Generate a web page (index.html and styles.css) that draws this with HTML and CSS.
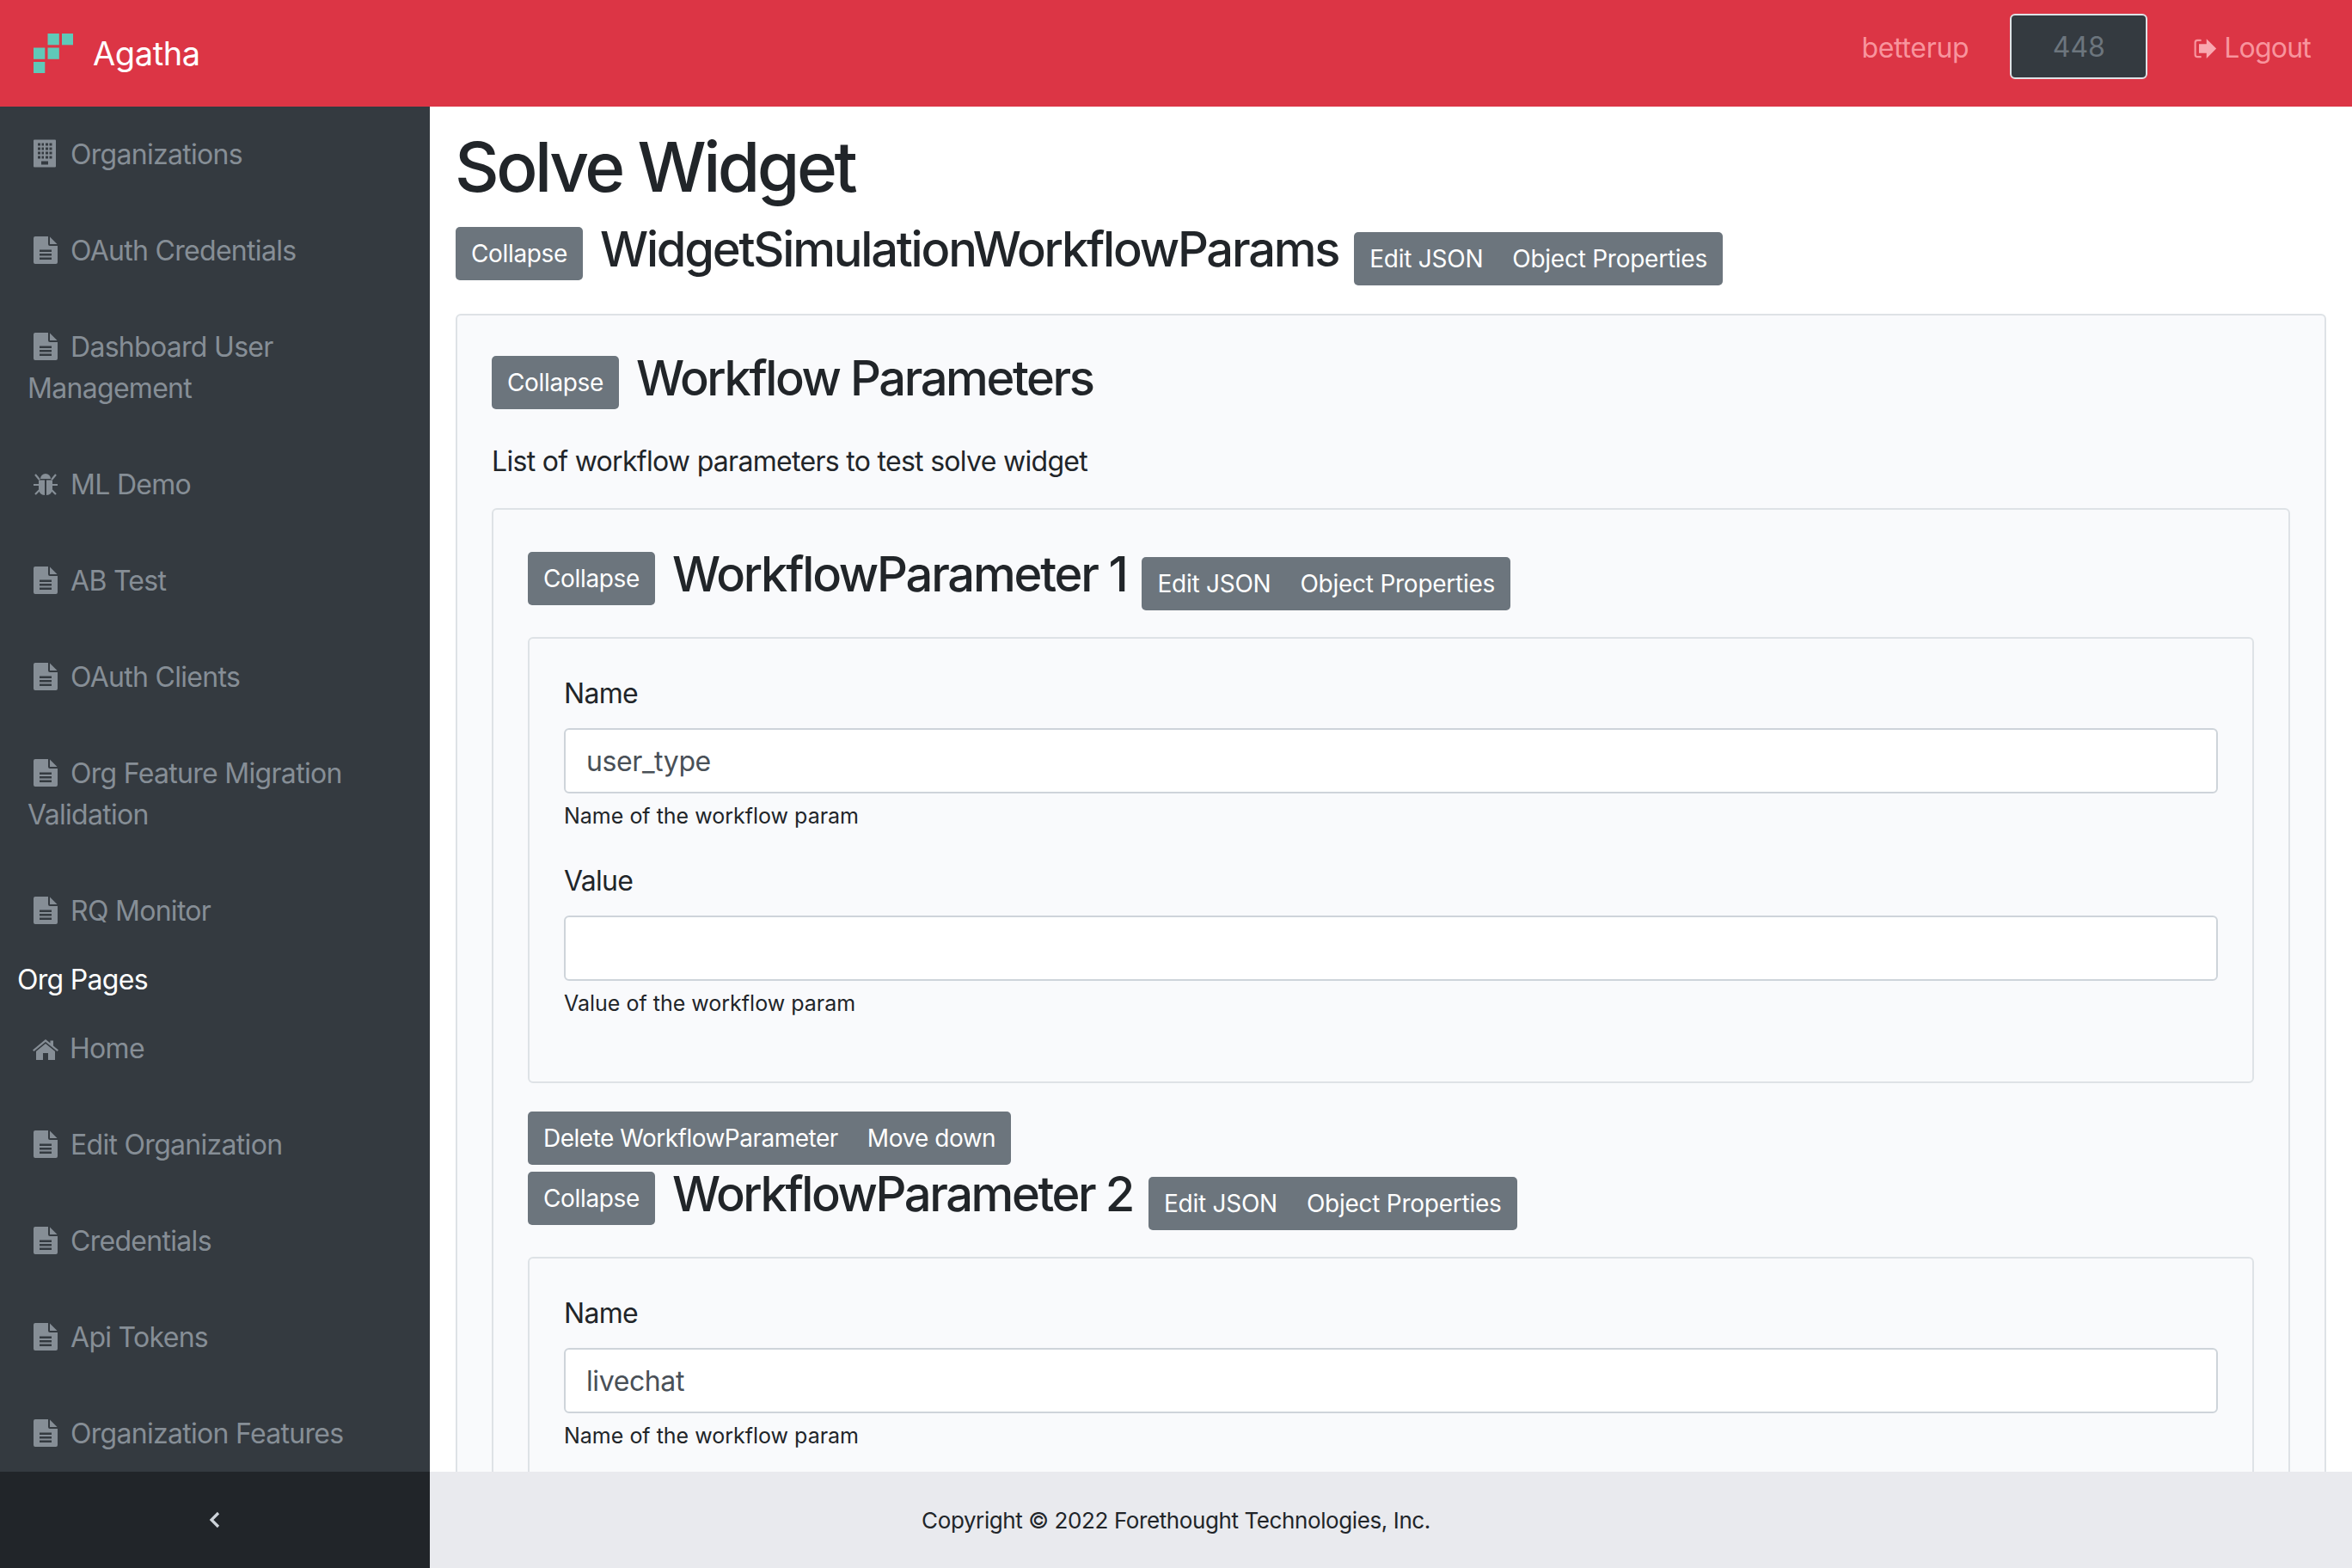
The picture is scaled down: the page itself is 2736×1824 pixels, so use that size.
FILE: index.html
```html
<!DOCTYPE html>
<html>
<head>
<meta charset="utf-8">
<title>Agatha</title>
<link rel="stylesheet" href="styles.css">
</head>
<body>
<svg class="defs" width="0" height="0">
	<symbol id="i-file" viewBox="0 0 28 32">
		<path fill-rule="evenodd" d="M2 0H17V9a2 2 0 0 0 2 2H28V30a2 2 0 0 1-2 2H2a2 2 0 0 1-2-2V2a2 2 0 0 1 2-2ZM7 15.500V18H21V15.500ZM7 20V22.500H21V20ZM7 24.500V27H21V24.500Z"/>
		<path d="M19 0.500 27.500 9H19Z"/>
	</symbol>
</svg>

<header class="topbar">
	<a class="brand">
		<svg class="brand-logo" viewBox="0 0 46 46">
			<rect x="16.500" y="0" width="13.300" height="13.300"/><rect x="33" y="0" width="13" height="13.300"/>
			<rect x="0" y="16.500" width="13.300" height="13.300"/><rect x="16.500" y="16.500" width="13.300" height="13.300"/>
			<rect x="0" y="33" width="13.300" height="13"/>
		</svg>
		<span>Agatha</span>
	</a>
	<div class="topbar-right">
		<a class="top-link">betterup</a>
		<div class="count-box">448</div>
		<a class="top-link logout">
			<svg viewBox="0 0 32 28"><path d="M10 3H6a3 3 0 0 0-3 3v16a3 3 0 0 0 3 3h4" fill="none" stroke="currentColor" stroke-width="2.500" stroke-linecap="round"/><path class="logout-arrow" d="M18 1 31 14 18 27V20H8V8H18Z"/></svg>
			Logout
		</a>
	</div>
</header>

<div class="layout">
	<aside class="sidebar">
		<nav class="side-nav">
			<a class="side-link"><svg class="side-icon building" viewBox="0 0 26 32"><path fill-rule="evenodd" d="M1 0H25a1 1 0 0 1 1 1V31a1 1 0 0 1-1 1H1a1 1 0 0 1-1-1V1a1 1 0 0 1 1-1ZM5 4V7H8V4ZM9.500 4V7H12V4ZM14 4V7H17V4ZM18.500 4V7H21.500V4ZM5 9V12H8V9ZM9.500 9V12H12V9ZM14 9V12H17V9ZM18.500 9V12H21.500V9ZM5 14V17H8V14ZM9.500 14V17H12V14ZM14 14V17H17V14ZM18.500 14V17H21.500V14ZM5 19V22H8V19ZM9.500 19V22H12V19ZM14 19V22H17V19ZM18.500 19V22H21.500V19ZM9 25V29H17V25Z"/></svg>Organizations</a>
			<a class="side-link"><svg class="side-icon"><use href="#i-file"/></svg>OAuth Credentials</a>
			<a class="side-link"><svg class="side-icon"><use href="#i-file"/></svg>Dashboard User Management</a>
			<a class="side-link"><svg class="side-icon bug" viewBox="0 0 28 28"><path d="M8 8a6 6 0 0 1 12 0Z"/><path d="M6 9.500H13V27C9 27 6 24 6 19.500ZM15 9.500H22V19.500C22 24 19 27 15 27Z"/><path d="M2 3 7 9M26 3 21 9M0 15H7M28 15H21M2 26 7 21M26 26 21 21" fill="none" stroke="currentColor" stroke-width="2.200"/></svg>ML Demo</a>
			<a class="side-link"><svg class="side-icon"><use href="#i-file"/></svg>AB Test</a>
			<a class="side-link"><svg class="side-icon"><use href="#i-file"/></svg>OAuth Clients</a>
			<a class="side-link"><svg class="side-icon"><use href="#i-file"/></svg>Org Feature Migration Validation</a>
			<a class="side-link"><svg class="side-icon"><use href="#i-file"/></svg>RQ Monitor</a>
			<div class="side-title">Org Pages</div>
			<a class="side-link"><svg class="side-icon home" viewBox="0 0 30 24"><path d="M15 0 20.500 4.500V1.500H24V7.500L30 12.500 28.500 14 15 3 1.500 14 0 12.500Z"/><path fill-rule="evenodd" d="M15 5 26 14V24H18V16H12V24H4V14Z"/></svg>Home</a>
			<a class="side-link"><svg class="side-icon"><use href="#i-file"/></svg>Edit Organization</a>
			<a class="side-link"><svg class="side-icon"><use href="#i-file"/></svg>Credentials</a>
			<a class="side-link"><svg class="side-icon"><use href="#i-file"/></svg>Api Tokens</a>
			<a class="side-link"><svg class="side-icon"><use href="#i-file"/></svg>Organization Features</a>
		</nav>
		<div class="side-toggle"><svg viewBox="0 0 14 20"><path d="M11 2 3 10 11 18" fill="none" stroke="currentColor" stroke-width="3.200"/></svg></div>
	</aside>

	<div class="content-wrap">
		<main class="content">
			<h1 class="page-title">Solve Widget</h1>
			<div class="head-row">
				<button class="btn">Collapse</button>
				<h3 class="obj-title">WidgetSimulationWorkflowParams</h3>
				<div class="btn-group"><button class="btn">Edit JSON</button><button class="btn">Object Properties</button></div>
			</div>
			<div class="well outer">
				<div class="head-row">
					<button class="btn">Collapse</button>
					<h3 class="obj-title tight">Workflow Parameters</h3>
				</div>
				<p class="desc">List of workflow parameters to test solve widget</p>
				<div class="well inner">
					<div class="head-row">
						<button class="btn">Collapse</button>
						<h3 class="obj-title">WorkflowParameter 1</h3>
						<div class="btn-group"><button class="btn">Edit JSON</button><button class="btn">Object Properties</button></div>
					</div>
					<div class="well form-well">
						<div class="field">
							<label>Name</label>
							<input class="input" value="user_type">
							<small>Name of the workflow param</small>
						</div>
						<div class="field">
							<label>Value</label>
							<input class="input" value="">
							<small>Value of the workflow param</small>
						</div>
					</div>
					<div class="btn-group solo"><button class="btn">Delete WorkflowParameter</button><button class="btn">Move down</button></div>
					<div class="head-row">
						<button class="btn">Collapse</button>
						<h3 class="obj-title tight">WorkflowParameter 2</h3>
						<div class="btn-group"><button class="btn">Edit JSON</button><button class="btn">Object Properties</button></div>
					</div>
					<div class="well form-well">
						<div class="field">
							<label>Name</label>
							<input class="input" value="livechat">
							<small>Name of the workflow param</small>
						</div>
					</div>
				</div>
			</div>
		</main>
		<footer class="footer">Copyright © 2022 Forethought Technologies, Inc.</footer>
	</div>
</div>
</body>
</html>
```

FILE: styles.css
```css
* { box-sizing: border-box; }

html, body {
	margin: 0;
	height: 100%;
	overflow: hidden;
}

body {
	font-family: Inter, "Liberation Sans", sans-serif;
	font-size: 32px;
	line-height: 1.5;
	letter-spacing: -0.7px;
	color: #212529;
	background: #fff;
	display: flex;
	flex-direction: column;
}

.defs { position: absolute; }

.topbar {
	height: 124px;
	flex: none;
	background: #dc3545;
	display: flex;
	align-items: center;
	justify-content: space-between;
	padding: 0 48px 0 39px;
}

.brand {
	display: flex;
	align-items: center;
	color: #fff;
	font-size: 38px;
	letter-spacing: -0.4px;
}

.brand-logo {
	width: 46px;
	height: 46px;
	fill: #5fc9b8;
	margin-right: 23px;
}

.topbar-right {
	display: flex;
	align-items: center;
	padding-bottom: 16px;
}

.top-link {
	color: #f8949d;
	display: flex;
	align-items: center;
	letter-spacing: -0.3px;
	padding-top: 4px;
}

.count-box {
	width: 160px;
	height: 76px;
	margin: 0 53px 0 48px;
	padding-top: 2px;
	border: 2px solid #dee2e6;
	border-radius: 6px;
	background: #343a40;
	color: #6c757d;
	letter-spacing: 0;
	display: flex;
	align-items: center;
	justify-content: center;
}

.logout { letter-spacing: -0.8px; }

.logout svg {
	width: 28px;
	height: 25px;
	margin-right: 8px;
}

.logout-arrow { fill: #f9a8b0; }

.layout {
	flex: 1;
	display: flex;
	min-height: 0;
}

.sidebar {
	width: 500px;
	flex: none;
	background: #343a40;
	display: flex;
	flex-direction: column;
}

.side-nav {
	flex: 1;
	overflow: hidden;
	min-height: 0;
}

.side-link {
	display: block;
	padding: 32px;
	color: #868e96;
}

.side-icon {
	width: 28px;
	height: 32px;
	fill: currentColor;
	color: #868e96;
	margin: 0 15px 0 7px;
	vertical-align: -4px;
}

.side-icon.building {
	width: 26px;
	height: 33px;
	margin-right: 17px;
}

.side-icon.bug {
	height: 28px;
	vertical-align: -2px;
}

.side-icon.home {
	width: 30px;
	height: 24px;
	margin: 0 13px 0 6px;
	vertical-align: -2px;
}

.side-title {
	color: #fff;
	padding: 0 20px;
}

.side-toggle {
	height: 112px;
	flex: none;
	background: #212529;
	color: #ced4da;
	display: flex;
	align-items: center;
	justify-content: center;
}

.side-toggle svg {
	width: 14px;
	height: 20px;
}

.content-wrap {
	flex: 1;
	min-width: 0;
	display: flex;
	flex-direction: column;
}

.content {
	flex: 1;
	min-height: 0;
	overflow: hidden;
	padding: 22px 30px 0;
}

.footer {
	height: 112px;
	flex: none;
	padding-right: 500px;
	background: #e9eaee;
	font-size: 26px;
	letter-spacing: -0.4px;
	display: flex;
	align-items: center;
	justify-content: center;
}

.page-title {
	margin: 0 0 22px -1px;
	font-size: 80px;
	font-weight: 500;
	line-height: 96px;
	letter-spacing: -3.5px;
}

.head-row {
	display: flex;
	align-items: flex-start;
	min-height: 68px;
}

.btn {
	font: inherit;
	font-size: 28px;
	line-height: 42px;
	letter-spacing: -0.35px;
	height: 62px;
	padding: 0 18px;
	color: #fff;
	background: #6c757d;
	border: 0;
	border-radius: 5px;
}

.obj-title {
	margin: 0 18px 0 20px;
	font-size: 56px;
	font-weight: 500;
	line-height: 53px;
	letter-spacing: -2.2px;
}

.obj-title.tight { letter-spacing: -2.4px; }

.btn-group {
	display: inline-flex;
	margin-top: 6px;
	border-radius: 5px;
	overflow: hidden;
}

.btn-group .btn {
	border-radius: 0;
	letter-spacing: -0.25px;
}

.btn-group .btn:first-child { padding-right: 17px; }
.btn-group .btn:last-child { padding-left: 17px; }

.btn-group.solo {
	display: flex;
	width: fit-content;
	margin: 33px 0 8px;
}

.btn-group.solo .btn { letter-spacing: -0.5px; }

.well {
	margin-top: 31px;
	padding: 40px;
	background: #f9fafc;
	border: 2px solid #dee2e6;
	border-radius: 6px;
}

.well.outer {
	margin-top: 33px;
	padding-top: 47px;
}

.well.inner {
	margin-top: 30px;
	padding-top: 49px;
}

.desc {
	margin: 31px 0 0;
}

.field { margin-bottom: 32px; }

.field label {
	display: block;
	margin-bottom: 16px;
}

.input {
	display: block;
	width: 100%;
	height: 76px;
	padding: 0 24px;
	font: inherit;
	letter-spacing: -0.4px;
	color: #495057;
	background: #fff;
	border: 2px solid #ced4da;
	border-radius: 6px;
}

.field small {
	display: block;
	margin-top: 8px;
	font-size: 25px;
	letter-spacing: 0;
}
```
